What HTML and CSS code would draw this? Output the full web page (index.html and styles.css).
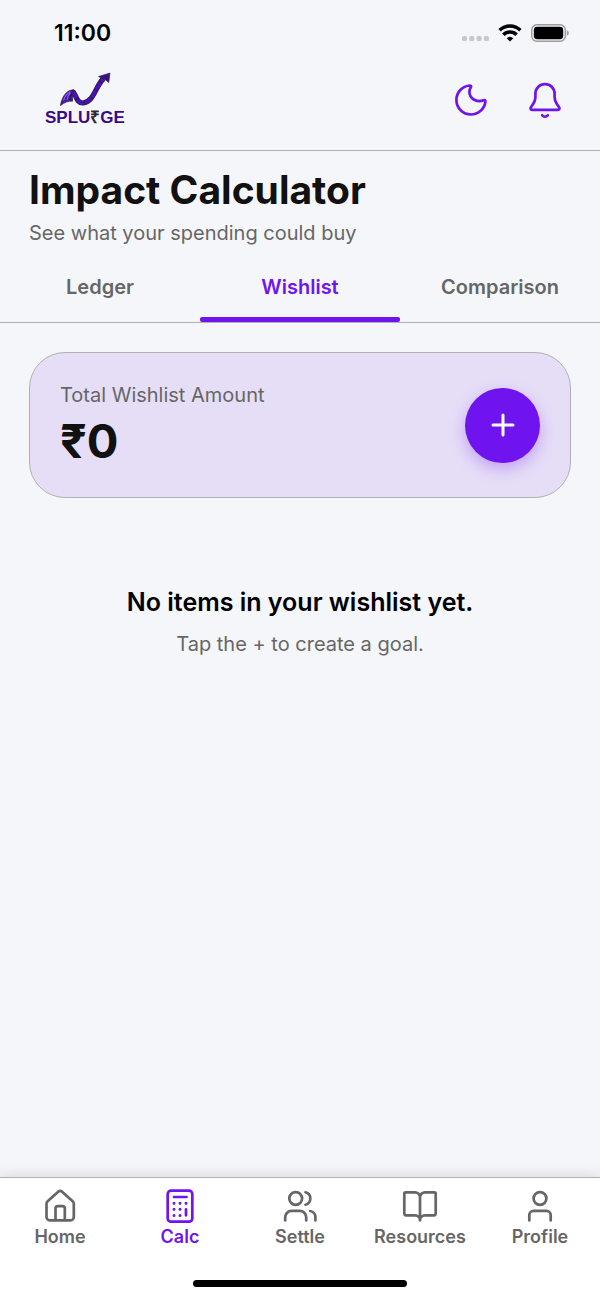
FILE: index.html
```html
<!DOCTYPE html>
<html lang="en">
<head>
    <meta charset="UTF-8">
    <meta name="viewport" content="width=device-width, initial-scale=1.0">
    <title>Splurge - Impact Calculator</title>
    <link rel="stylesheet" href="styles.css">
</head>
<body>
    <div class="status-bar">
        <span class="time">11:00</span>
        <div class="status-icons">
            <svg class="signal" width="28" height="16" viewBox="0 0 28 16">
                <g fill="#c8c8cb">
                    <rect x="1" y="9" width="5" height="5" rx="1.6"/>
                    <rect x="8.300" y="9" width="5" height="5" rx="1.6"/>
                    <rect x="15.600" y="9" width="5" height="5" rx="1.6"/>
                    <rect x="22.900" y="9" width="5" height="5" rx="1.6"/>
                </g>
            </svg>
            <svg width="24" height="18" viewBox="0 0 24 18">
                <g fill="none" stroke="#000" stroke-width="3.500">
                    <path d="M1.600 6.200a15 15 0 0 1 20.800 0"/>
                    <path d="M5.400 10.700a9.400 9.400 0 0 1 13.200 0"/>
                </g>
                <path d="M12 17.600l-3.300-3.400a4.800 4.800 0 0 1 6.600 0z"/>
            </svg>
            <svg width="38" height="18" viewBox="0 0 38 18">
                <rect x=".7" y=".7" width="33.600" height="16.600" rx="5.200" fill="none" stroke="#9b9b9f" stroke-width="1.400"/>
                <rect x="2.800" y="2.800" width="29.400" height="12.400" rx="3.400"/>
                <path d="M35.800 6.200v5.600c1.300-.5 2-1.600 2-2.800s-.7-2.300-2-2.800z" fill="#9b9b9f"/>
            </svg>
        </div>
    </div>

    <header class="header">
        <a class="logo" href="#" aria-label="Splurge">
            <svg width="52" height="36" viewBox="0 0 52 36">
                <path d="M1.500 33.500C2.500 27 6 19.500 12 18.200c2-.4 4 .2 5 1.500-2 1-3.500 3-3.500 5.500v4c-3.500-.5-8 1-12 4.300z" fill="#4a1aa6" stroke="#2b2340" stroke-width=".8"/>
                <path d="M13 19.500c4.500 1.500 3.500 12 11 11.500 11-1 12.500-17 20.500-24.500" fill="none" stroke="#2b1a50" stroke-width="5.200"/>
                <path d="M13.500 20c4 2 3.500 11.500 10.500 11 11-1 12.500-17 20.500-24.500" fill="none" stroke="#4a12b0" stroke-width="3.800" stroke-dasharray="8 1"/>
                <path d="M39.500 4.500L51 1l-1.200 9.500-3.300-2.500-4.500-2z" fill="#3a1282" stroke="#2b2340" stroke-width=".6"/>
                <path d="M4.500 28.500c1.500-4.500 3.500-7 6.500-8.500M8 28c.5-3 1.500-5.500 3.500-7.500" fill="none" stroke="#8a5cf0" stroke-width="1.100"/>
                <path d="M12.800 21.500c-1.500 2-2 4-2 6.500" fill="none" stroke="#1d1430" stroke-width="1.200"/>
            </svg>
            <span class="logo-text">SPLU<span class="rupee">₹</span>GE</span>
        </a>
        <div class="header-actions">
            <button class="icon-btn" type="button" aria-label="Dark mode">
                <svg class="icon" viewBox="0 0 36 36">
                    <path d="M17 3.500C9.200 3.900 3.400 10.300 3.400 18A14.500 14.500 0 0 0 17.900 32.500c7.500 0 13.700-5.600 14.500-13 .1-1.200-.8-1.700-1.900-1.300-7.300 2.700-14.100-1.700-14.100-8.400 0-1.500.4-2.900 1.300-4.300.7-1.100.5-2-.7-2z"/>
                </svg>
            </button>
            <button class="icon-btn" type="button" aria-label="Notifications">
                <svg class="icon" viewBox="0 0 36 36">
                    <path d="M18 2.200c5.600 0 9.600 4.200 9.600 9.600v3.400c0 2.600.7 4.600 2.200 6.700 1.300 1.800 2.300 3 2.600 4 .3 1.200-.4 1.900-1.700 1.900H5.300c-1.300 0-2-.7-1.700-1.900.3-1 1.300-2.200 2.600-4 1.500-2.100 2.200-4.100 2.200-6.700v-3.400c0-5.400 4-9.600 9.600-9.600z"/>
                    <path d="M15.200 33.300c1.600 1.800 4 1.800 5.600 0"/>
                </svg>
            </button>
        </div>
    </header>

    <main class="content">
        <div class="page-title">
            <h1>Impact Calculator</h1>
            <p>See what your spending could buy</p>
        </div>

        <nav class="tabs">
            <button class="tab" type="button">Ledger</button>
            <button class="tab active" type="button">Wishlist</button>
            <button class="tab" type="button">Comparison</button>
        </nav>

        <section class="total-card">
            <div>
                <p class="total-label">Total Wishlist Amount</p>
                <p class="total-amount">₹0</p>
            </div>
            <button class="add-btn" type="button" aria-label="Add goal">
                <svg class="icon" viewBox="0 0 36 36">
                    <path d="M18 8v20M8 18h20"/>
                </svg>
            </button>
        </section>

        <section class="empty">
            <h2>No items in your wishlist yet.</h2>
            <p>Tap the + to create a goal.</p>
        </section>
    </main>

    <footer class="bottom-bar">
        <nav class="bottom-nav">
            <a class="nav-item" href="#">
                <svg class="icon" viewBox="0 0 36 36">
                    <path d="M4.500 15.600c0-1.200.5-1.900 1.400-2.700L16.500 3.600a2.500 2.500 0 0 1 3.300 0l10.600 9.300c.9.800 1.400 1.500 1.400 2.700V29a3.300 3.300 0 0 1-3.300 3.300H7.800A3.300 3.300 0 0 1 4.500 29z"/>
                    <path d="M13.500 32V20.300a2.200 2.200 0 0 1 2.200-2.200h4.900a2.200 2.200 0 0 1 2.200 2.200V32"/>
                </svg>
                Home
            </a>
            <a class="nav-item active" href="#">
                <svg class="icon" viewBox="0 0 36 36">
                    <rect x="5.700" y="2.700" width="24.600" height="31" rx="3.300"/>
                    <path d="M12 9h12.500M24 21.300v6"/>
                    <path class="dots" d="M12 15.200h.01M18 15.200h.01M24 15.200h.01M12 21.300h.01M18 21.300h.01M12 27.400h.01M18 27.400h.01"/>
                </svg>
                Calc
            </a>
            <a class="nav-item" href="#">
                <svg class="icon" viewBox="0 0 36 36">
                    <circle cx="13.700" cy="10.500" r="6.400"/>
                    <path d="M3.200 32.500v-3.200a6.400 6.400 0 0 1 6.400-6.400h8.200a6.400 6.400 0 0 1 6.400 6.400v3.200"/>
                    <path d="M23.500 4.300a6.400 6.400 0 0 1 0 12.400M28.200 23a6.400 6.400 0 0 1 5.200 6.300v3.200"/>
                </svg>
                Settle
            </a>
            <a class="nav-item" href="#">
                <svg class="icon" viewBox="0 0 36 36">
                    <path d="M18 9.300a5 5 0 0 0-5-5H3.800a1.500 1.500 0 0 0-1.500 1.500v20a1.500 1.500 0 0 0 1.500 1.500H13a5 5 0 0 1 5 5 5 5 0 0 1 5-5h9.200a1.500 1.500 0 0 0 1.500-1.500v-20a1.500 1.500 0 0 0-1.500-1.500H23a5 5 0 0 0-5 5zM18 9.300v23"/>
                </svg>
                Resources
            </a>
            <a class="nav-item" href="#">
                <svg class="icon" viewBox="0 0 36 36">
                    <circle cx="18" cy="10.500" r="6.400"/>
                    <path d="M7.300 32.500v-5.400a4.200 4.200 0 0 1 4.200-4.200h13a4.200 4.200 0 0 1 4.200 4.200v5.400"/>
                </svg>
                Profile
            </a>
        </nav>
        <div class="home-indicator"></div>
    </footer>
</body>
</html>
```
FILE: styles.css
```css
* {
    box-sizing: border-box;
}
body {
    margin: 0;
    min-height: 100vh;
    display: flex;
    flex-direction: column;
    background: #f5f6fa;
    color: #111;
    font-family: Inter, "Liberation Sans", sans-serif;
}
h1, h2, p {
    margin: 0;
}
button {
    font-family: inherit;
    border: none;
    background: none;
    padding: 0;
    cursor: pointer;
}
a {
    text-decoration: none;
}
.icon {
    display: block;
    width: 36px;
    height: 36px;
    fill: none;
    stroke: currentColor;
    stroke-width: 2.7;
    stroke-linecap: round;
    stroke-linejoin: round;
}
.dots {
    stroke-width: 3;
}

/* Status bar */
.status-bar {
    display: flex;
    justify-content: space-between;
    align-items: center;
    height: 66px;
    padding: 0 31px 0 54px;
}
.time {
    font-size: 23px;
    font-weight: 600;
    color: #000;
}
.status-icons {
    display: flex;
    align-items: center;
    gap: 9px;
}
.signal {
    margin-top: 3px;
}

/* Header */
.header {
    display: flex;
    justify-content: space-between;
    align-items: center;
    height: 85px;
    padding: 0 37px 16px 45px;
    border-bottom: 1px solid #b0b0b0;
}
.logo {
    display: flex;
    flex-direction: column;
    align-items: center;
    color: #3a0a86;
}
.logo-text {
    font-family: "Liberation Sans", sans-serif;
    font-size: 17px;
    font-weight: 700;
    line-height: 20px;
}
.rupee {
    color: #2e2b2b;
}
.header-actions {
    display: flex;
    gap: 38px;
}
.icon-btn {
    color: #6f14ee;
}

/* Title and tabs */
.content {
    flex: 1;
}
.page-title {
    padding: 14px 29px 0;
}
.page-title h1 {
    font-size: 39px;
    font-weight: 700;
    line-height: 50px;
}
.page-title p {
    margin-top: 5px;
    font-size: 20px;
    line-height: 26px;
    color: #666;
}
.tabs {
    display: flex;
    margin-top: 15px;
    border-bottom: 1px solid #b0b0b0;
}
.tab {
    flex: 1;
    height: 61px;
    padding-bottom: 6px;
    border-bottom: 4px solid transparent;
    font-size: 20px;
    font-weight: 600;
    color: #666;
}
.tab.active {
    position: relative;
    color: #6f14ee;
}
.tab.active::after {
    content: "";
    position: absolute;
    left: 0;
    right: 0;
    bottom: -4px;
    height: 5px;
    border-radius: 2px;
    background: #6f14ee;
}

/* Wishlist total */
.total-card {
    display: flex;
    justify-content: space-between;
    align-items: center;
    margin: 29px 29px 0;
    padding: 28px 30px;
    border: 1px solid #b0b0b0;
    border-radius: 36px;
    background: #e6def7;
}
.total-label {
    font-size: 20px;
    line-height: 28px;
    color: #666;
}
.total-amount {
    margin-top: 4px;
    font-size: 47px;
    font-weight: 700;
    line-height: 56px;
}
.add-btn {
    display: flex;
    align-items: center;
    justify-content: center;
    width: 75px;
    height: 75px;
    border-radius: 50%;
    background: #6f14ee;
    color: #fff;
    box-shadow: 0 6px 16px rgba(111, 20, 238, 0.3);
}
.add-btn .icon {
    stroke-width: 3;
}

/* Empty state */
.empty {
    padding: 88px 30px 30px;
    text-align: center;
}
.empty h2 {
    font-size: 25px;
    font-weight: 600;
    line-height: 32px;
    color: #000;
}
.empty p {
    margin-top: 12px;
    font-size: 20px;
    line-height: 28px;
    color: #666;
}

/* Bottom navigation */
.bottom-bar {
    padding: 10px 0 12px;
    border-top: 1px solid #b0b0b0;
    background: #fff;
    box-shadow: 0 -3px 12px rgba(0, 0, 0, 0.1);
}
.bottom-nav {
    display: flex;
}
.nav-item {
    flex: 1;
    display: flex;
    flex-direction: column;
    align-items: center;
    gap: 2px;
    font-size: 18px;
    font-weight: 600;
    line-height: 22px;
    color: #666;
}
.nav-item.active {
    color: #6f14ee;
}
.home-indicator {
    width: 214px;
    height: 7px;
    margin: 32px auto 0;
    border-radius: 4px;
    background: #000;
}
```
